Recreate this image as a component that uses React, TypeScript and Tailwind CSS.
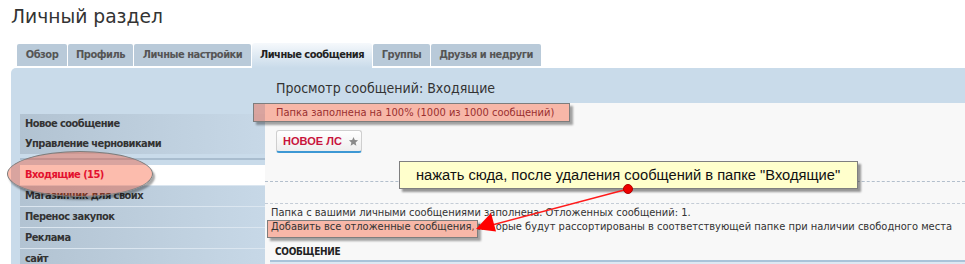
import React from "react";

const tabs = [
  { label: "Обзор", w: "w-[50px]" },
  { label: "Профиль", w: "w-[65px]" },
  { label: "Личные настройки", w: "w-[117px]" },
  { label: "Личные сообщения", w: "w-[120px]", active: true },
  { label: "Группы", w: "w-[57px]" },
  { label: "Друзья и недруги", w: "w-[110px]" },
];

function Row({ children }: { children: React.ReactNode }) {
  return (
    <div className="h-[20px] flex items-center pl-[5px] bg-linear-to-r from-[#b2c3d2] to-[#c7d8e7] text-[11px] font-bold tracking-[-0.55px] text-[#333]">
      {children}
    </div>
  );
}

export default function App() {
  return (
    <div className="relative w-[965px] h-[264px] overflow-hidden bg-white text-[#333] font-['DejaVu_Sans_Condensed','DejaVu_Sans',sans-serif]">
      {/* title */}
      <div className="h-[43px] pl-[11px] pt-[5px]">
        <h1 className="font-['DejaVu_Sans',sans-serif] text-[18.7px] leading-[24px] text-[#333]">Личный раздел</h1>
      </div>

      {/* tabs */}
      <div className="flex gap-[1px] pl-[17px] h-[25px] items-start">
        {tabs.map((t) =>
          t.active ? (
            <div
              key={t.label}
              className={`${t.w} h-[25px] shrink-0 rounded-t-[3px] bg-linear-to-b from-[#f6f9fc] to-[#c9dbea] flex items-center justify-center text-[11px] font-bold tracking-[-0.5px] text-[#222]`}
            >
              {t.label}
            </div>
          ) : (
            <div
              key={t.label}
              className={`${t.w} h-[22px] shrink-0 mt-[1px] rounded-t-[2px] bg-[#b9cad9] flex items-center justify-center text-[11px] font-bold tracking-[-0.5px] text-[#555]`}
            >
              {t.label}
            </div>
          )
        )}
      </div>

      {/* panel */}
      <div className="ml-[11px] flex h-[196px] bg-[#c9dbea] rounded-tl-[5px]">
        <aside className="w-[254px] shrink-0 pt-[46px] pl-[9px]">
          <Row>Новое сообщение</Row>
          <Row>Управление черновиками</Row>
          <div className="h-[2px] mt-[4px] bg-[#a9bdcf]" />
          <div className="mt-[5px] h-[20px] flex items-center pl-[5px] bg-white text-[11px] font-bold tracking-[-0.55px] text-[#e3112e]">
            <span className="relative z-[2]">Входящие (15)</span>
          </div>
          <div className="border-t border-[#dbe6f0]">
            <Row>Магазинчик для своих</Row>
          </div>
          <div className="border-t border-[#dbe6f0]">
            <Row>Перенос закупок</Row>
          </div>
          <div className="border-t border-[#dbe6f0]">
            <Row>Реклама</Row>
          </div>
          <div className="border-t border-[#dbe6f0]">
            <Row>сайт</Row>
          </div>
        </aside>

        <main className="flex-1 flex flex-col min-w-0">
          <div className="h-[35px] shrink-0 pl-[11px] pt-[12px] text-[14px] leading-[16px] text-[#333]">
            Просмотр сообщений: Входящие
          </div>
          <div className="flex-1 min-h-0 overflow-hidden bg-[#f8f8f8]">
            <div className="h-[20px] pl-[11px] flex items-center text-[11px] text-[#9a2f2f]">
              <span className="relative z-[2]">Папка заполнена на 100% (1000 из 1000 сообщений)</span>
            </div>
            <div className="pl-[11px] pt-[7px]">
              <button className="h-[23px] w-[86px] flex items-center justify-center gap-[6px] pl-[4px] rounded-[3px] border border-[#cfcfcf] border-b-2 border-b-[#3d98d4] bg-linear-to-b from-white to-[#eeeeee] font-['Liberation_Sans',Arial,sans-serif] text-[11px] font-bold text-[#c8143c]">
                <span>НОВОЕ ЛС</span>
                <svg width="11" height="11" viewBox="0 0 24 24">
                  <path
                    d="M12 2l2.9 6.9 7.1.6-5.4 4.7 1.7 7.3L12 17.6 5.7 21.5l1.7-7.3L2 9.5l7.1-.6z"
                    fill="#8a8a8a"
                  />
                </svg>
              </button>
            </div>
            <div className="h-[29px] border-b border-dashed border-[#b3bfcc]" />
            <div className="h-[22px] border-b border-dashed border-[#c4ccd6]" />
            <div className="pl-[6px] pt-[2px] text-[11px] leading-[14px] text-[#333]">
              <div>Папка с вашими личными сообщениями заполнена. Отложенных сообщений: 1.</div>
              <div>
                <span className="relative z-[2]">Добавить все отложенные сообщения</span>, которые будут рассортированы в соответствующей папке при наличии свободного места
              </div>
            </div>
            <div className="mt-[11px] pl-[10px] text-[10px] leading-[14px] font-bold tracking-[-0.3px] text-[#222]">СООБЩЕНИЕ</div>
            <div className="ml-[5px] mt-[1px] border-b-2 border-[#a9c3d9]" />
            <div className="ml-[5px] h-[10px] bg-[#dde8f2]" />
          </div>
        </main>
      </div>

      {/* annotations */}
      <div className="absolute left-[7px] top-[151px] w-[146px] h-[46px] rounded-[50%] border border-[#7d7d7d] bg-[rgba(246,63,20,0.35)] shadow-[2px_3px_2px_rgba(0,0,0,0.35)] z-[1]" />
      <div className="absolute left-[253px] top-[103px] w-[317px] h-[19px] border border-[#7d7d7d] bg-[rgba(246,63,20,0.35)] shadow-[3px_3px_2px_rgba(0,0,0,0.35)] z-[1]" />
      <div className="absolute left-[267px] top-[220px] w-[211px] h-[18px] border border-[#7d7d7d] bg-[rgba(246,63,20,0.35)] shadow-[3px_3px_2px_rgba(0,0,0,0.35)] z-[1]" />
      <div className="absolute left-[399px] top-[161px] w-[459px] h-[28px] border border-[#7f7f7f] bg-[#ffffcc] shadow-[3px_3px_2px_rgba(0,0,0,0.4)] z-[3] flex items-center pl-[16px] font-['Liberation_Sans',Arial,sans-serif] text-[14.7px] text-[#111]">
        нажать сюда, после удаления сообщений в папке "Входящие"
      </div>
      <svg className="absolute left-0 top-0 z-[4] pointer-events-none" width="965" height="264">
        <line x1="628" y1="189" x2="492" y2="225" stroke="#ff1a1a" strokeWidth="1.5" />
        <polygon points="476,229 496,231.5 491,213" fill="#ff0000" />
        <circle cx="628" cy="189" r="4.5" fill="#ee0000" stroke="#b00000" strokeWidth="1" />
      </svg>
    </div>
  );
}
